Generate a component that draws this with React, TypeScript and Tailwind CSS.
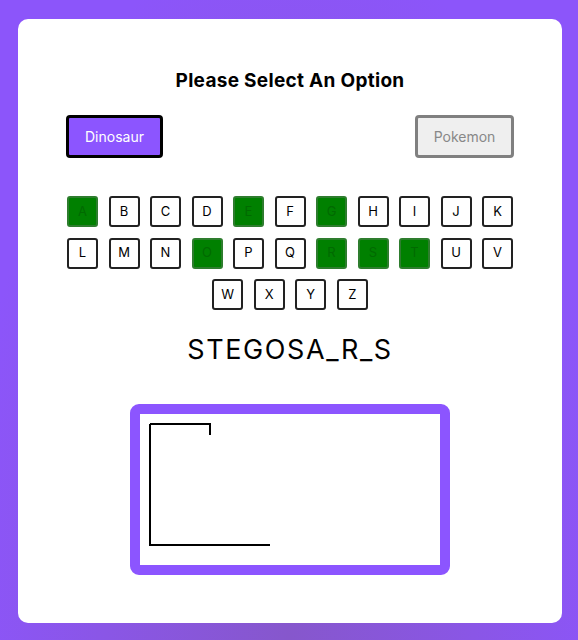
import React from 'react'

const ROWS = [
  ['A', 'B', 'C', 'D', 'E', 'F', 'G', 'H', 'I', 'J', 'K'],
  ['L', 'M', 'N', 'O', 'P', 'Q', 'R', 'S', 'T', 'U', 'V'],
  ['W', 'X', 'Y', 'Z'],
]

const USED = new Set(['A', 'E', 'G', 'O', 'R', 'S', 'T'])

function LetterKey({ letter }: { letter: string }) {
  const used = USED.has(letter)
  return (
    <button
      type="button"
      disabled={used}
      className={`w-[31px] h-[31px] rounded-[3px] border-2 text-[13px] flex items-center justify-center ${
        used
          ? 'bg-[#008000] border-[#2e7d2e] text-[#006a00]'
          : 'bg-white border-[#222] text-black'
      }`}
    >
      {letter}
    </button>
  )
}

function Gallows() {
  return (
    <svg width="300" height="151" viewBox="0 0 300 151" className="block bg-white">
      <path d="M10 10 H70 V21 M10 10 V131 H130" fill="none" stroke="#000" strokeWidth="2" />
    </svg>
  )
}

export default function App() {
  return (
    <div className="min-h-[640px] w-full bg-[radial-gradient(ellipse_at_50%_100%,#8657cc_0%,#8a56e6_45%,#8c55fa_80%)] pl-[18px] pr-[16px] pt-[19px] pb-[17px] font-['Inter',sans-serif]">
      <div className="bg-white rounded-[10px] h-[604px] flex flex-col items-center pt-[49px]">
        {/* Title */}
        <h1 className="text-[19px] font-bold text-black leading-[26px] tracking-[0.3px]">Please Select An Option</h1>

        {/* Options */}
        <div className="w-full flex justify-between px-[48px] mt-[21px]">
          <button
            type="button"
            className="w-[97px] h-[43px] rounded-[4px] border-[3px] border-black bg-[#8c55ff] text-white text-[14px]"
          >
            Dinosaur
          </button>
          <button
            type="button"
            className="w-[99px] h-[43px] rounded-[4px] border-[3px] border-[#808080] bg-[#efefef] text-[#888] text-[14px]"
          >
            Pokemon
          </button>
        </div>

        {/* Keyboard */}
        <div className="flex flex-col items-center gap-y-[10.5px] mt-[38px]">
          {ROWS.map((row, i) => (
            <div key={i} className="flex gap-x-[10.5px]">
              {row.map((l) => (
                <LetterKey key={l} letter={l} />
              ))}
            </div>
          ))}
        </div>

        {/* Word */}
        <p className="mt-[23px] text-[27px] text-black tracking-[1.6px] leading-[34px]">STEGOSA_R_S</p>

        {/* Drawing */}
        <div className="mt-[37px] rounded-[9px] border-[10px] border-[#8c55ff]">
          <Gallows />
        </div>
      </div>
    </div>
  )
}
